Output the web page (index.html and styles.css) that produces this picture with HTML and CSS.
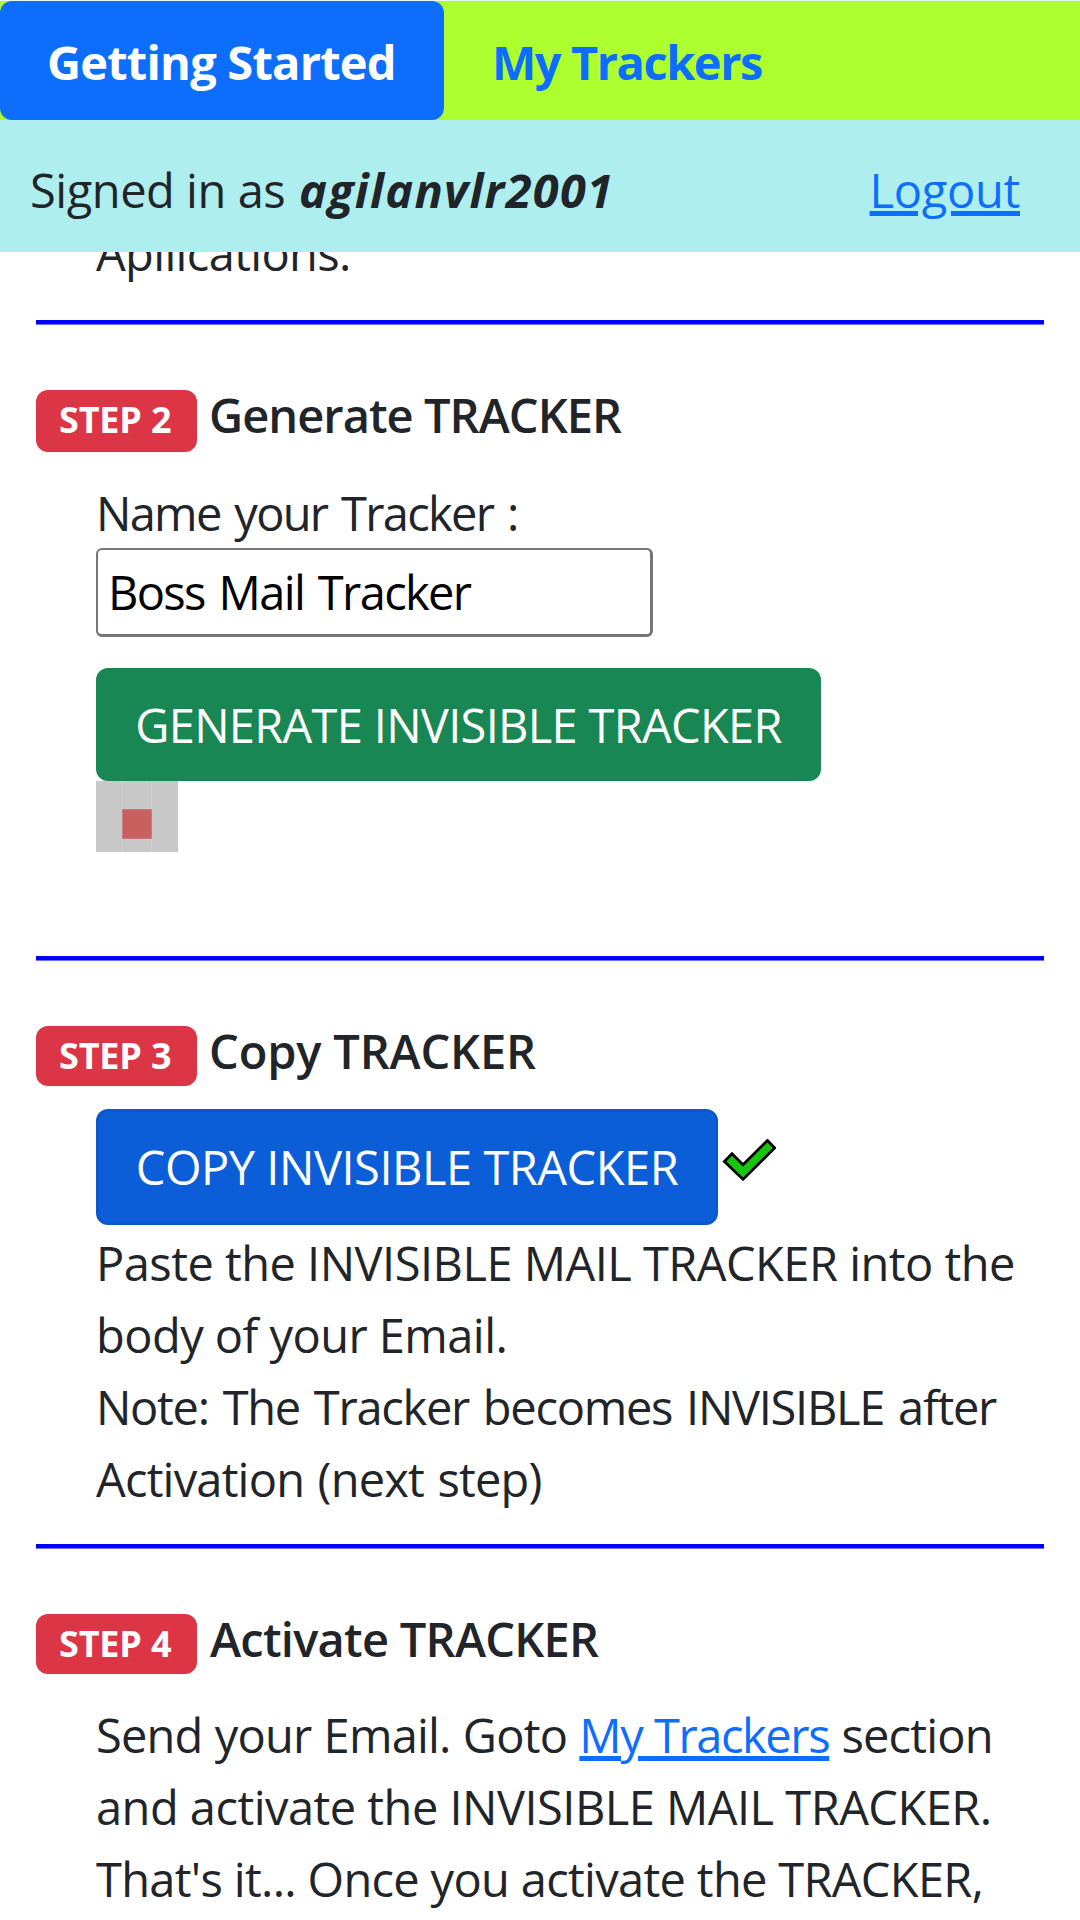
FILE: index.html
```html
<!DOCTYPE html>
<html lang="en">
<head>
<meta charset="utf-8">
<title>Mail Tracker</title>
<link rel="stylesheet" href="styles.css">
</head>
<body>
<header class="topbar">
  <nav class="tabs">
    <a class="tab tab-active">Getting Started</a>
    <a class="tab tab-plain">My Trackers</a>
  </nav>
  <div class="account">
    <div class="signed"><span class="signed-label">Signed in as</span><em class="user">agilanvlr2001</em></div>
    <a class="link logout">Logout</a>
  </div>
</header>
<main class="content">
  <p class="body step1-end">Apllications.</p>
  <hr class="rule">
  <section class="step step-generate">
    <h2 class="head"><span class="badge badge-tall">STEP 2</span><span class="title title-generate">Generate TRACKER</span></h2>
    <div class="body">
      <label class="label" for="name">Name your Tracker :</label>
      <input class="field" id="name" type="text" value="Boss Mail Tracker">
      <button class="btn btn-green">GENERATE INVISIBLE TRACKER</button>
      <div class="tracker"><i class="tracker-dot"></i></div>
    </div>
  </section>
  <hr class="rule">
  <section class="step step-copy">
    <h2 class="head"><span class="badge">STEP 3</span><span class="title title-copy">Copy TRACKER</span></h2>
    <div class="body">
      <div class="copy-row">
        <button class="btn btn-blue">COPY INVISIBLE TRACKER</button>
        <svg class="check" width="54" height="43" viewBox="0 0 54 43"><path d="M2.4 22.5 10 14.8l11 11L45.4 1.5l7.3 7.4L21 40.4z" fill="#16c60c" stroke="#000" stroke-width="2.8"/></svg>
      </div>
      <p class="text"><span class="line line-paste">Paste the INVISIBLE MAIL TRACKER into the</span>
      <span class="line line-body">body of your Email.</span>
      <span class="line line-note">Note: The Tracker becomes INVISIBLE after</span>
      <span class="line line-next">Activation (next step)</span></p>
    </div>
  </section>
  <hr class="rule rule-tight">
  <section class="step step-activate">
    <h2 class="head"><span class="badge">STEP 4</span><span class="title title-activate">Activate TRACKER</span></h2>
    <div class="body">
      <p class="text"><span class="line line-send">Send your Email. Goto <a class="link link-trackers">My Trackers</a> section</span>
      <span class="line line-and">and activate the INVISIBLE MAIL TRACKER.</span>
      <span class="line line-thats">That's it... Once you activate the TRACKER,</span></p>
    </div>
  </section>
</main>
</body>
</html>
```
FILE: styles.css
```css
* { box-sizing: border-box; }
html, body { height: 100%; }
body {
  margin: 0;
  overflow: hidden;
  background: #fff;
  color: #212529;
  font: 400 47px/72px "Open Sans", "Noto Sans", sans-serif;
}
p, h2 { margin: 0; }

.topbar { position: fixed; inset: 0 0 auto 0; padding-top: 1px; background: #e9f5ee; }
.tabs { display: flex; height: 119px; background: #adff2f; font-weight: 700; }
.tab { height: 119px; padding-top: 25px; white-space: nowrap; color: #0d6efd; }
.tab-active { width: 444px; padding-left: 47px; border-radius: 12px; background: #0d6efd; color: #fff; letter-spacing: -.785px; }
.tab-plain { padding-left: 48px; letter-spacing: -1.46px; }
.account { display: flex; justify-content: space-between; height: 132px; padding: 34px 60px 0 30px; background: #afeeee; }
.signed { display: flex; white-space: nowrap; }
.signed-label { width: 269px; letter-spacing: -.46px; }
.user { font-weight: 700; letter-spacing: 1.25px; }
.link { color: #0d6efd; text-decoration: underline; text-decoration-thickness: 5px; text-underline-offset: 3px; }
.logout { letter-spacing: -.29px; }

.content { padding: 217px 36px 0; }
.body { padding-left: 60px; }
.step1-end { letter-spacing: -.65px; }
.rule { height: 5px; margin: 31px 0 0; border: 0; border-bottom: 1px solid #6e6eff; background: #00f; background-clip: padding-box; }
.rule-tight { margin-top: 29px; }
.head { display: flex; align-items: baseline; height: 66px; margin-top: 60px; font-size: 47px; line-height: 60px; font-weight: 600; white-space: nowrap; }
.badge { width: 161px; padding: 12px 0 12px 23px; border-radius: 12px; background: #dc3545; color: #fff; font-size: 36px; line-height: 36px; font-weight: 700; letter-spacing: -.16px; }
.badge-tall { padding-bottom: 14px; }
.title { margin-left: 12px; }
.title-generate { letter-spacing: -.95px; }
.title-copy { letter-spacing: -.16px; }
.title-activate { margin-left: 13px; letter-spacing: -.73px; }

.step-generate .body { padding-top: 26px; padding-bottom: 73px; }
.label { display: block; letter-spacing: -1.7px; word-spacing: 3.2px; }
.field { display: block; width: 557px; height: 89px; margin-top: -1px; padding: 0 0 0 10px; border: 2px solid #767676; border-right-width: 3px; border-bottom-width: 3px; border-radius: 6px; background: #fff; color: #000; font: inherit; letter-spacing: -1.65px; word-spacing: 3.2px; outline: 0; }
.btn { display: block; padding: 0; border: 0; border-radius: 12px; color: #fff; font: inherit; white-space: nowrap; }
.btn-green { width: 725px; height: 113px; margin-top: 31px; background: #198754; letter-spacing: -.7px; }
.tracker { display: flex; justify-content: center; width: 82px; height: 71px; padding-top: 28px; background: linear-gradient(90deg, #c8c8c8 26px, #cfcfcf 26px 27px, #c8c8c8 27px 55px, #cfcfcf 55px 56px, #c8c8c8 56px); }
.tracker-dot { width: 30px; height: 30px; border: 1px solid #c97c7c; background: #c86060; }

.step-copy .body { padding-top: 22px; }
.copy-row { display: flex; height: 118px; }
.btn-blue { width: 622px; height: 116px; border: 3px solid #0a58ca; background: #0b5ed7; letter-spacing: -.47px; }
.check { margin: 30px 0 0 4px; }

.step-activate .body { padding-top: 24px; }
.line { display: block; white-space: nowrap; }
.line-paste { letter-spacing: -.52px; }
.line-body { letter-spacing: -.55px; }
.line-note { letter-spacing: -1.28px; word-spacing: 3px; }
.line-next { letter-spacing: -.8px; word-spacing: 2px; }
.line-send { letter-spacing: -.8px; word-spacing: .8px; }
.link-trackers { letter-spacing: -1.4px; }
.line-and { letter-spacing: -.52px; }
.line-thats { letter-spacing: -.68px; }
```
